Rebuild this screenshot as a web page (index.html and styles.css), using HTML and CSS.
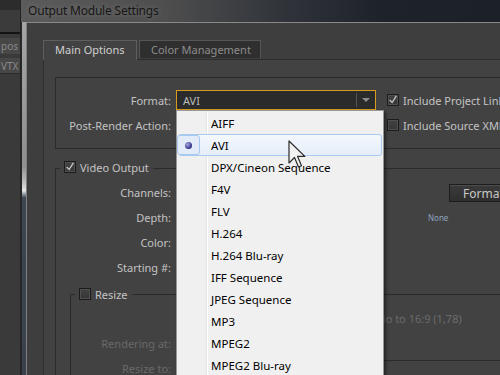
FILE: index.html
```html
<!DOCTYPE html>
<html lang="en">
<head>
  <meta charset="UTF-8" />
  <title>Output Module Settings</title>
  <link rel="stylesheet" href="styles.css">
</head>
<body>

  <div class="app">

    <div class="side">
      <div class="side-top"></div>
      <div class="side-tab">pos</div>
      <div class="side-tab">VTX</div>
    </div>

    <div class="window">

      <div class="titlebar">Output Module Settings</div>

      <div class="frame">
        <div class="frame-edge"></div>

        <div class="client">

          <div class="tabs">
            <div class="tab active">Main Options</div>
            <div class="tab">Color Management</div>
          </div>

          <div class="panel">

            <!-- Format -->
            <div class="format-box">
              <div class="field-row">
                <label class="label">Format:</label>
                <div class="select active">
                  <span class="select-text">AVI</span>
                  <span class="select-arrow"></span>
                </div>
                <span class="check checked"><svg viewBox="0 0 12 12" width="10" height="10"><path d="M2 6 L5 9 L10 1" fill="none" stroke="#c6c6c6" stroke-width="1.6"/></svg></span>
                <span class="check-text">Include Project Link</span>
              </div>
              <div class="field-row second">
                <label class="label">Post-Render Action:</label>
                <div class="select">
                  <span class="select-text">None</span>
                  <span class="select-arrow"></span>
                </div>
                <span class="check"></span>
                <span class="check-text">Include Source XMP</span>
              </div>
            </div>

            <!-- Video Output -->
            <div class="group video">
              <div class="legend">
                <span class="check checked"><svg viewBox="0 0 12 12" width="10" height="10"><path d="M2 6 L5 9 L10 1" fill="none" stroke="#c6c6c6" stroke-width="1.6"/></svg></span>
                <span>Video Output</span>
              </div>

              <div class="vrow">
                <span class="label">Channels:</span>
                <span class="spacer"></span>
                <button class="btn">Format</button>
              </div>
              <div class="vrow">
                <span class="label">Depth:</span>
                <span class="spacer"></span>
                <span class="none">None</span>
              </div>
              <div class="vrow">
                <span class="label">Color:</span>
              </div>
              <div class="vrow">
                <span class="label">Starting #:</span>
              </div>

              <!-- Resize -->
              <div class="group resize">
                <div class="legend">
                  <span class="check"></span>
                  <span>Resize</span>
                </div>
                <div class="vrow">
                  <span class="label"></span>
                  <span class="lock">Lock Aspect Ratio to 16:9 (1,78)</span>
                </div>
                <div class="vrow">
                  <span class="label dim">Rendering at:</span>
                </div>
                <div class="vrow">
                  <span class="label dim">Resize to:</span>
                  <span class="res-box"></span>
                </div>
              </div>
            </div>

          </div>
        </div>
      </div>
    </div>

    <!-- open format list -->
    <div class="menu">
      <div class="menu-item"><span class="gutter"></span>AIFF</div>
      <div class="menu-item active"><span class="gutter"><i class="dot"></i></span>AVI</div>
      <div class="menu-item"><span class="gutter"></span>DPX/Cineon Sequence</div>
      <div class="menu-item"><span class="gutter"></span>F4V</div>
      <div class="menu-item"><span class="gutter"></span>FLV</div>
      <div class="menu-item"><span class="gutter"></span>H.264</div>
      <div class="menu-item"><span class="gutter"></span>H.264 Blu-ray</div>
      <div class="menu-item"><span class="gutter"></span>IFF Sequence</div>
      <div class="menu-item"><span class="gutter"></span>JPEG Sequence</div>
      <div class="menu-item"><span class="gutter"></span>MP3</div>
      <div class="menu-item"><span class="gutter"></span>MPEG2</div>
      <div class="menu-item"><span class="gutter"></span>MPEG2 Blu-ray</div>
    </div>

    <svg class="cursor" width="20" height="30" viewBox="0 0 20 30">
      <path d="M1 1 L1 23 L6.5 17.5 L10.5 27 L13.5 25.8 L9.6 16.4 L16.8 16.4 Z" fill="#f2f2f2" stroke="#2a2a2a" stroke-width="1.2" stroke-linejoin="round"/>
    </svg>

  </div>

</body>
</html>
```

FILE: styles.css
```css
* {
  margin: 0;
  padding: 0;
  box-sizing: border-box;
}

body {
  width: 500px;
  height: 375px;
  overflow: hidden;
  background-color: #3a3a3a;
  font-family: "Noto Sans", "Open Sans", sans-serif;
  font-size: 11px;
  color: #c4c4c4;
}

.app {
  position: relative;
  display: flex;
  height: 375px;
}

/* app strip behind the dialog */

.side {
  width: 21px;
  flex: none;
  background-color: #3a3a3a;
  border-right: 1px solid #242424;
}

.side-top {
  height: 34px;
  background: linear-gradient(#2c2c2c 0 10px, #3b3b3b 10px);
  border-bottom: 2px solid #141414;
}

.side-tab {
  height: 16px;
  margin-top: 4px;
  padding-left: 1px;
  background-color: #474747;
  color: #8a8a8a;
  font-size: 10px;
  line-height: 16px;
  white-space: nowrap;
}

.side-tab + .side-tab {
  margin-top: 4px;
  border-bottom: 1px solid #2a2a2a;
}

/* window */

.window {
  flex: 1;
  display: flex;
  flex-direction: column;
  min-width: 0;
}

.titlebar {
  height: 22px;
  flex: none;
  padding-left: 7px;
  background: linear-gradient(to right, #5b5b5b, #4e4e4e 30%, #30343a 55%, #1e2229 75%, #1c2027);
  color: #161616;
  font-size: 12px;
  letter-spacing: -0.2px;
  line-height: 21px;
  text-shadow: 0 0 6px rgba(255, 255, 255, 0.25);
  white-space: nowrap;
}

.frame {
  flex: 1;
  display: flex;
}

.frame-edge {
  width: 5px;
  flex: none;
  border-left: 1px solid #2a2a2a;
  background: linear-gradient(#a5a5a5, #8f8f8f 40%, #b8b8b8 44%, #e6e6e6 47%, #3c4552 49%, #37404c);
}

.client {
  flex: 1;
  min-width: 0;
  background-color: #3e3e3e;
  border-top: 1px solid #8a8a8a;
  border-left: 1px solid #808080;
  padding: 17px 0 0 16px;
  display: flex;
  flex-direction: column;
}

/* tabs */

.tabs {
  display: flex;
  gap: 2px;
  height: 19px;
  flex: none;
}

.tab {
  height: 18px;
  padding-left: 11px;
  border: 1px solid #565656;
  border-bottom: none;
  background-color: #2f2f2f;
  color: #8c8c8c;
  line-height: 18px;
  white-space: nowrap;
  width: 122px;
}

.tab.active {
  position: relative;
  z-index: 1;
  width: 94px;
  height: 20px;
  background-color: #424242;
  border-color: #5e5e5e;
  color: #d0d0d0;
}

.panel {
  flex: 1;
  background-color: #424242;
  border-top: 1px solid #2c2c2c;
  border-left: 1px solid #2e2e2e;
  padding: 17px 0 0 11px;
}

/* format box */

.format-box {
  height: 72px;
  border: 1px solid #2b2b2b;
  border-right: none;
  padding-top: 12px;
}

.field-row {
  display: flex;
  align-items: center;
  height: 20px;
  white-space: nowrap;
}

.field-row.second {
  margin-top: 5px;
}

.label {
  flex: none;
  width: 115px;
  margin-right: 5px;
  text-align: right;
  color: #c2c2c2;
  white-space: nowrap;
}

.select {
  flex: none;
  display: flex;
  align-items: center;
  width: 200px;
  height: 20px;
  border: 1px solid #3a3a3a;
  background-color: #2b2b2b;
  color: #bcbcbc;
}

.select.active {
  border-color: #d69c1c;
}

.select-text {
  flex: 1;
  padding-left: 6px;
}

.select-arrow {
  width: 19px;
  height: 14px;
  border-left: 1px solid #555;
  display: flex;
  align-items: center;
  justify-content: center;
}

.select-arrow::after {
  content: "";
  border-left: 4px solid transparent;
  border-right: 4px solid transparent;
  border-top: 4px solid #8c8c8c;
}

.check {
  flex: none;
  display: inline-flex;
  align-items: center;
  justify-content: center;
  width: 12px;
  height: 12px;
  border: 1px solid #1c1c1c;
  background: linear-gradient(#424242, #363636);
  box-shadow: inset 0 0 0 1px #505050;
}

.field-row .check {
  margin-left: 11px;
}

.check-text {
  margin-left: 4px;
  color: #c4c4c4;
}

/* groups */

.group {
  border-top: 1px solid #2b2b2b;
  border-left: 1px solid #2b2b2b;
  padding-left: 8px;
}

.group.video {
  margin-top: 19px;
}

.legend {
  display: flex;
  align-items: center;
  gap: 4px;
  width: max-content;
  height: 14px;
  margin: -9px 0 0 -4px;
  padding: 0 4px;
  background-color: #424242;
  color: #c4c4c4;
}

.vrow {
  display: flex;
  align-items: center;
  height: 25px;
  white-space: nowrap;
}

.legend + .vrow {
  margin-top: 6px;
}

.video > .vrow .label {
  width: 107px;
}

.spacer {
  flex: none;
  width: 200px;
}

.btn {
  flex: none;
  width: 60px;
  height: 18px;
  margin-left: 73px;
  padding: 0 13px;
  border: 1px solid #1c1c1c;
  border-right: none;
  background: linear-gradient(#3a3a3a, #2f2f2f);
  box-shadow: inset 0 1px 0 #4c4c4c;
  color: #c8c8c8;
  font-family: inherit;
  font-size: 12px;
  text-align: left;
  white-space: nowrap;
}

.none {
  margin-left: 52px;
  font-size: 8px;
  color: #8ea3be;
}

.group.resize {
  margin: 14px 0 0 6px;
}

.resize .legend {
  margin-top: -8px;
}

.resize .legend + .vrow {
  margin-top: 5px;
}

.resize .label {
  width: 92px;
}

.label.dim {
  color: #696969;
}

.lock {
  margin-left: 126px;
  color: #6c6c6c;
}

.res-box {
  align-self: flex-start;
  width: 200px;
  height: 21px;
  margin: 4px 0 0 130px;
  border-top: 1px solid #2b2b2b;
}

/* open dropdown list */

.menu {
  position: absolute;
  left: 176px;
  top: 110px;
  width: 208px;
  height: 280px;
  padding: 1px;
  border: 1px solid #979797;
  background: linear-gradient(to right, transparent 29px, #e2e3e3 29px 30px, #ffffff 30px 31px, transparent 31px), #f0f0f0;
  box-shadow: 2px 2px 3px rgba(0, 0, 0, 0.45);
  color: #000;
  font-size: 11.5px;
}

.menu-item {
  display: flex;
  align-items: center;
  height: 22px;
  border: 1px solid transparent;
  border-radius: 3px;
  white-space: nowrap;
}

.gutter {
  display: flex;
  align-items: center;
  justify-content: center;
  width: 23px;
  height: 20px;
  margin-right: 9px;
  border: 1px solid transparent;
  border-radius: 3px;
}

.menu-item.active {
  border-color: #a9caf0;
  background: linear-gradient(#f4f8fd, #e4edf9);
}

.menu-item.active .gutter {
  margin-left: -2px;
  margin-right: 11px;
  border-color: #a9caf0;
  background-color: #e2ebf7;
}

.dot {
  width: 7px;
  height: 7px;
  border-radius: 50%;
  background: radial-gradient(circle at 35% 35%, #a7a7e0, #2f2f86 70%);
}

.cursor {
  position: absolute;
  left: 288px;
  top: 140px;
}
```
